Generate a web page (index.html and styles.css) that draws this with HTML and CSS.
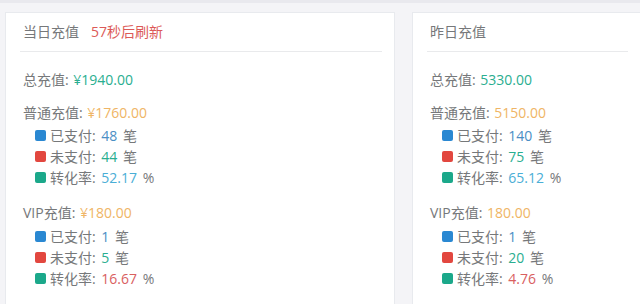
FILE: index.html
```html
<!DOCTYPE html>
<html lang="zh-CN">
<head>
<meta charset="utf-8">
<title>充值统计</title>
<link rel="stylesheet" href="styles.css">
</head>
<body>
<div class="topbar"></div>
<div class="grid">
  <section class="card">
    <div class="card-title">当日充值<span class="refresh">57秒后刷新</span></div>
    <div class="total">总充值: <span class="green">¥1940.00</span></div>
    <div class="group">
      <div class="head">普通充值: <span class="orange">¥1760.00</span></div>
      <div class="item"><i class="sq blue"></i>已支付: <span class="c-blue">48</span> 笔</div>
      <div class="item"><i class="sq red"></i>未支付: <span class="c-green">44</span> 笔</div>
      <div class="item"><i class="sq teal"></i>转化率: <span class="c-info">52.17</span> %</div>
    </div>
    <div class="group vip">
      <div class="head">VIP充值: <span class="orange">¥180.00</span></div>
      <div class="item"><i class="sq blue"></i>已支付: <span class="c-blue">1</span> 笔</div>
      <div class="item"><i class="sq red"></i>未支付: <span class="c-green">5</span> 笔</div>
      <div class="item"><i class="sq teal"></i>转化率: <span class="c-red">16.67</span> %</div>
    </div>
  </section>
  <section class="card card-right">
    <div class="card-title">昨日充值</div>
    <div class="total">总充值: <span class="green">5330.00</span></div>
    <div class="group">
      <div class="head">普通充值: <span class="orange">5150.00</span></div>
      <div class="item"><i class="sq blue"></i>已支付: <span class="c-blue">140</span> 笔</div>
      <div class="item"><i class="sq red"></i>未支付: <span class="c-green">75</span> 笔</div>
      <div class="item"><i class="sq teal"></i>转化率: <span class="c-info">65.12</span> %</div>
    </div>
    <div class="group vip">
      <div class="head">VIP充值: <span class="orange">180.00</span></div>
      <div class="item"><i class="sq blue"></i>已支付: <span class="c-blue">1</span> 笔</div>
      <div class="item"><i class="sq red"></i>未支付: <span class="c-green">20</span> 笔</div>
      <div class="item"><i class="sq teal"></i>转化率: <span class="c-red">4.76</span> %</div>
    </div>
  </section>
</div>
</body>
</html>
```
FILE: styles.css
```css
html, body {
  margin: 0;
  padding: 0;
}
body {
  width: 640px;
  height: 304px;
  overflow: hidden;
  background: #f4f4f7;
  font-family: "Open Sans", "Noto Sans CJK SC", sans-serif;
  font-size: 14px;
  color: #76787a;
}
.topbar {
  height: 3px;
  background: #e9e9ee;
}
.grid {
  display: grid;
  grid-template-columns: 390px 1fr;
  column-gap: 17px;
  padding: 9px 0 0 5px;
  height: 292px;
}
.card {
  background: #fff;
  border: 1px solid #e8eaee;
  border-bottom: none;
  padding: 0 12px 0 14px;
  overflow: hidden;
}
.card-right {
  border-right: none;
}
.card-title {
  height: 38px;
  line-height: 38px;
  padding-left: 3px;
  border-bottom: 1px solid #e9eaec;
}
.refresh {
  margin-left: 12px;
  color: #dc5a58;
}
.total {
  margin-top: 17px;
  line-height: 22px;
  padding-left: 3px;
  word-spacing: 1px;
}
.group {
  margin-top: 10px;
  padding-left: 3px;
}
.group.vip {
  margin-top: 13px;
}
.head {
  line-height: 24px;
  word-spacing: 1px;
}
.item {
  display: flex;
  align-items: center;
  line-height: 21px;
  padding-left: 12px;
  white-space: pre;
  word-spacing: 2px;
}
.vip .head + .item {
  margin-top: 1px;
}
.sq {
  width: 11px;
  height: 11px;
  border-radius: 2px;
  margin-right: 4px;
  flex: none;
}
.sq.blue { background: #2a88d2; }
.sq.red { background: #e2473f; }
.sq.teal { background: #1ba88a; }
.green { color: #2aae90; }
.orange { color: #efb565; }
.c-blue { color: #4b8ec4; }
.c-green { color: #2aae90; }
.c-info { color: #4aaed6; }
.c-red { color: #d9605f; }
```
